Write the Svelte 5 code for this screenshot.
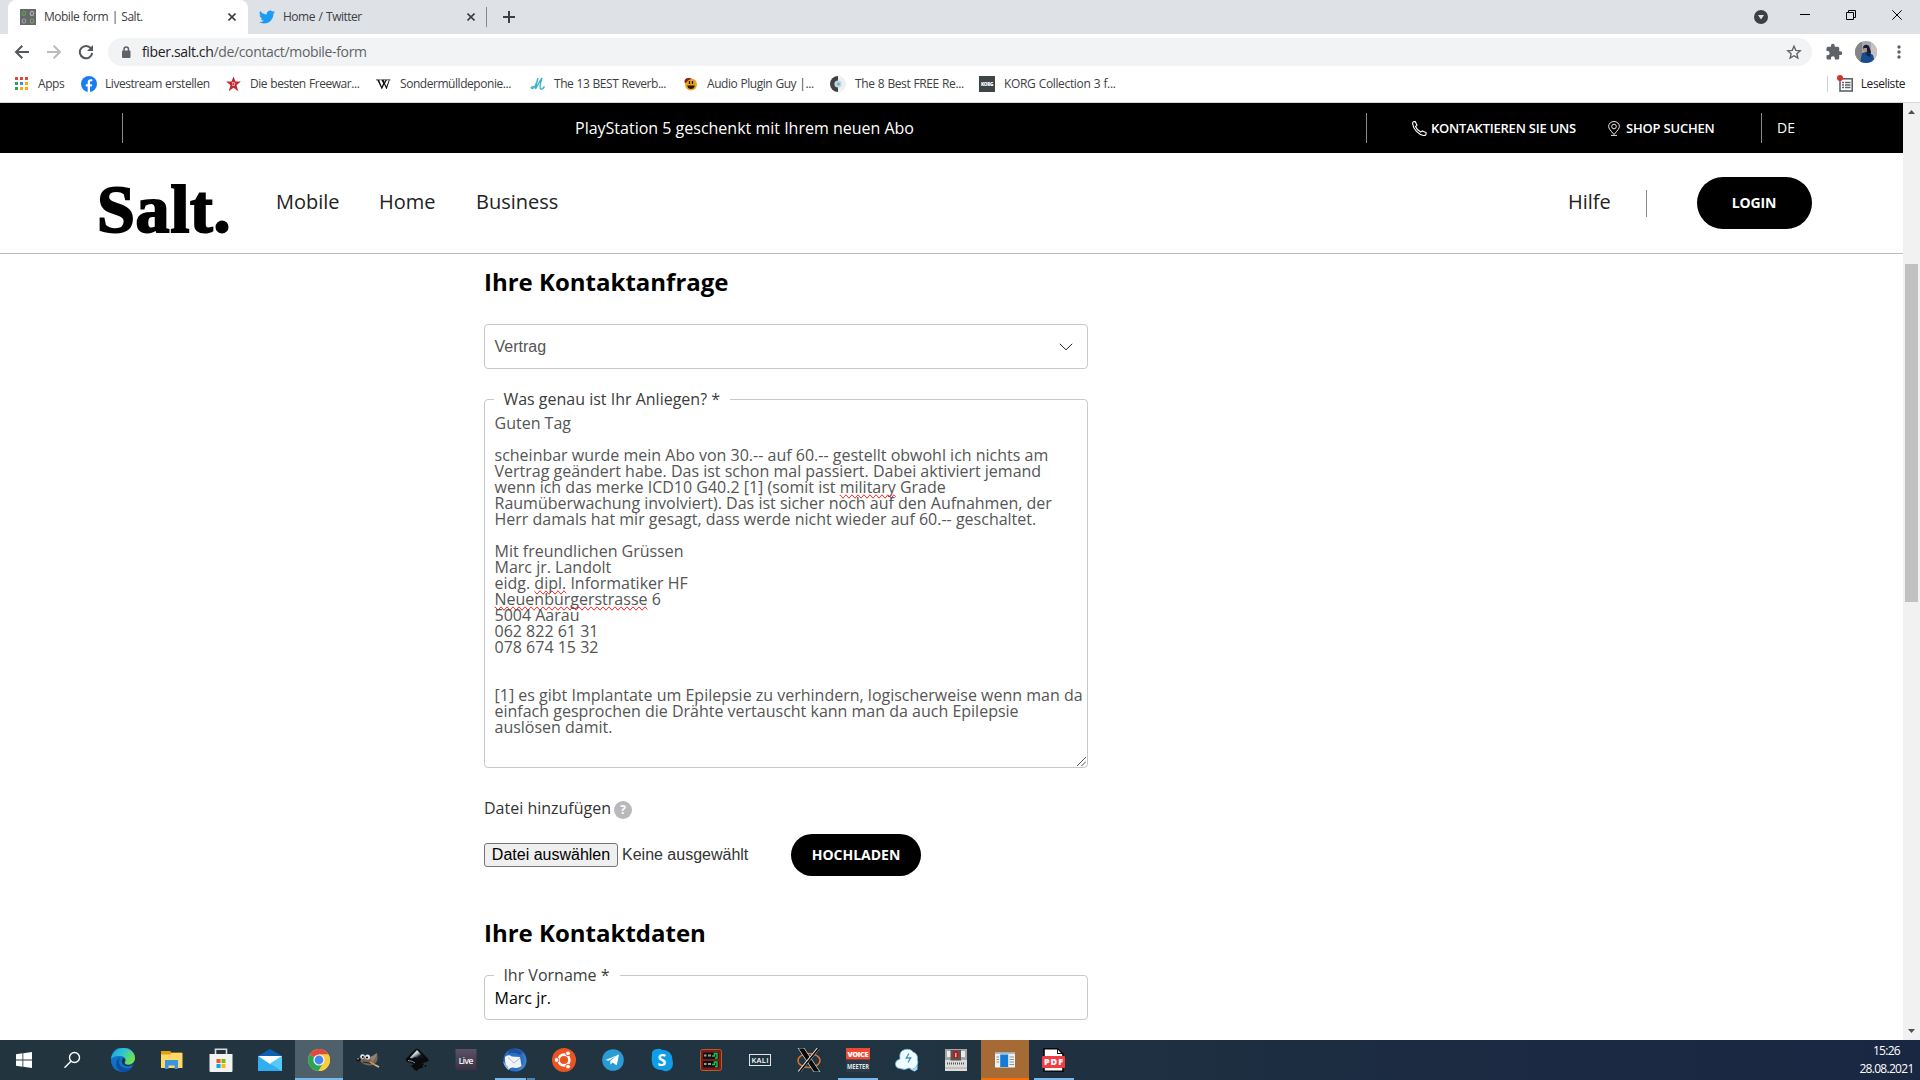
<script>
  const bookmarks = [
    { icon: 'apps', label: 'Apps' },
    { icon: 'facebook', label: 'Livestream erstellen' },
    { icon: 'star', label: 'Die besten Freewar...' },
    { icon: 'wiki', label: 'Sondermülldeponie...' },
    { icon: 'script', label: 'The 13 BEST Reverb...' },
    { icon: 'guy', label: 'Audio Plugin Guy |...' },
    { icon: 'dial', label: 'The 8 Best FREE Re...' },
    { icon: 'korg', label: 'KORG Collection 3 f...' }
  ];
  const tasks = [
    { id: 'edge' }, { id: 'files' }, { id: 'store' }, { id: 'mail' },
    { id: 'chrome', state: 'active' }, { id: 'gimp' }, { id: 'inkscape' }, { id: 'live' },
    { id: 'thunderbird', state: 'stacked' }, { id: 'ubuntu' }, { id: 'telegram' }, { id: 'skype' },
    { id: 'rack' }, { id: 'kali' }, { id: 'xorg' }, { id: 'voicemeeter', state: 'open' },
    { id: 'cloud' }, { id: 'scanner' }, { id: 'window', state: 'alert' }, { id: 'pdf', state: 'open' }
  ];
</script>

<div class="screen">
  <div class="tabs">
    <div class="tab active">
      <svg class="fav" width="16" height="16" viewBox="0 0 16 16"><rect width="16" height="16" fill="#65696b"/><g fill="none" stroke-width="1.2"><ellipse cx="4" cy="4.4" rx="1.7" ry="2" stroke="#6c9750"/><ellipse cx="12" cy="4.4" rx="1.7" ry="2" stroke="#a8adaf"/><ellipse cx="4" cy="12" rx="1.7" ry="2" stroke="#999ea0"/><ellipse cx="12" cy="12" rx="1.7" ry="2" stroke="#7fa05a"/></g></svg>
      <span class="title">Mobile form | Salt.</span>
      <svg class="x" width="8" height="8" viewBox="0 0 8 8"><path d="M.5.5l7 7M7.5.5l-7 7" stroke="#3c4043" stroke-width="1.6"/></svg>
    </div>
    <div class="tab second">
      <svg class="fav" width="16" height="16" viewBox="0 0 24 24"><path fill="#1d9bf0" d="M23.95 4.57a10 10 0 0 1-2.82.78 4.96 4.96 0 0 0 2.16-2.73c-.95.56-2 .96-3.13 1.19a4.92 4.92 0 0 0-8.39 4.48A13.9 13.9 0 0 1 1.64 3.16a4.92 4.92 0 0 0 1.52 6.57 4.9 4.9 0 0 1-2.23-.61v.06a4.92 4.92 0 0 0 3.95 4.83 5 5 0 0 1-2.21.08 4.94 4.94 0 0 0 4.6 3.42A9.87 9.87 0 0 1 0 19.54a13.94 13.94 0 0 0 7.55 2.21c9.05 0 14-7.5 14-13.98 0-.21 0-.42-.02-.63a9.94 9.94 0 0 0 2.42-2.57z"/></svg>
      <span class="title">Home / Twitter</span>
      <svg class="x" width="8" height="8" viewBox="0 0 8 8"><path d="M.5.5l7 7M7.5.5l-7 7" stroke="#3c4043" stroke-width="1.6"/></svg>
    </div>
    <i class="tabline"></i>
    <svg class="plus" width="12" height="12" viewBox="0 0 12 12"><path d="M6 0v12M0 6h12" stroke="#3c4043" stroke-width="2"/></svg>
    <div class="winbtns">
      <svg width="16" height="16" viewBox="0 0 16 16"><circle cx="8" cy="8" r="7" fill="#3c4043"/><path d="M5 6h6l-3 4.6z" fill="#dee1e6"/></svg>
      <svg width="10" height="16" viewBox="0 0 10 16"><path d="M0 5.5h10" stroke="#000"/></svg>
      <svg width="10" height="16" viewBox="0 0 10 16"><path d="M.5 3.500h7v7h-7zM2.500 3.500v-2h7v7h-2" fill="none" stroke="#000"/></svg>
      <svg width="10" height="16" viewBox="0 0 10 16"><path d="M.3 1.300l9.400 9.400M9.700 1.300L.3 10.700" stroke="#000"/></svg>
    </div>
  </div>

  <div class="toolbar">
    <svg width="16" height="16" viewBox="0 0 16 16"><path d="M15 8H2M8.300 1.700L2 8l6.300 6.300" fill="none" stroke="#54585d" stroke-width="2"/></svg>
    <svg width="16" height="16" viewBox="0 0 16 16"><path d="M1 8h13M7.700 1.700L14 8l-6.300 6.300" fill="none" stroke="#b9bbbe" stroke-width="2"/></svg>
    <svg width="16" height="16" viewBox="0 0 16 16"><path d="M13.200 4.600A6.200 6.200 0 1 0 14.200 9" fill="none" stroke="#54585d" stroke-width="2"/><path d="M15 1v6H9z" fill="#54585d"/></svg>
    <div class="omni">
      <svg width="10" height="13" viewBox="0 0 10 13"><rect x="1" y="4.500" width="8.500" height="7.500" rx="1" fill="#5f6368"/><path d="M3 5V3.300a2.250 2.250 0 0 1 4.500 0V5" fill="none" stroke="#5f6368" stroke-width="1.500"/></svg>
      <span class="url"><b>fiber.salt.ch</b>/de/contact/mobile-form</span>
      <svg class="fave" width="16" height="16" viewBox="0 0 24 24"><path d="M12 3.300l2.700 6.200 6.700.6-5.100 4.500 1.500 6.600-5.800-3.500-5.800 3.500 1.500-6.600-5.100-4.500 6.700-.6z" fill="none" stroke="#5f6368" stroke-width="2"/></svg>
    </div>
    <svg class="puzzle" width="18" height="18" viewBox="0 0 24 24"><path fill="#5f6368" d="M20.500 11H19V7a2 2 0 0 0-2-2h-4V3.500a2.500 2.500 0 0 0-5 0V5H4a2 2 0 0 0-2 2v3.800h1.500a2.700 2.700 0 0 1 0 5.400H2V20c0 1.100.9 2 2 2h3.800v-1.500a2.700 2.700 0 0 1 5.400 0V22H17a2 2 0 0 0 2-2v-4h1.500a2.500 2.500 0 0 0 0-5z"/></svg>
    <svg class="avatar" width="22" height="22" viewBox="0 0 22 22"><clipPath id="av"><circle cx="11" cy="11" r="11"/></clipPath><g clip-path="url(#av)"><rect width="22" height="22" fill="#a5a6a8"/><rect width="7" height="22" fill="#858486"/><rect x="16" width="6" height="22" fill="#c5c2c0"/><path d="M8 6q2-4 6-1l2 6-6 1z" fill="#16193b"/><path d="M9 7h3v4H9z" fill="#b98e7d"/><path d="M5 22l2-10 5-1 6 3 2 8z" fill="#174c8f"/><path d="M12 10l4 1-1 5-4-2z" fill="#18254b"/></g></svg>
    <svg class="dots" width="4" height="16" viewBox="0 0 4 16"><g fill="#5f6368"><circle cx="2" cy="3" r="1.700"/><circle cx="2" cy="8" r="1.700"/><circle cx="2" cy="13" r="1.700"/></g></svg>
  </div>

  <div class="bookmarks">
    {#each bookmarks as b}
      <div class="bm {b.icon}">
        <svg width="16" height="16" viewBox="0 0 16 16">
          {#if b.icon === 'apps'}
            <path d="M0 1h3v3H0zM5 1h3v3H5zM10 1h3v3h-3z" fill="#ea4335"/><path d="M0 6h3v3H0zM0 11h3v3H0z" fill="#34a060"/><path d="M5 6h3v3H5z" fill="#4285f4"/><path d="M10 6h3v3h-3zM5 11h3v3H5zM10 11h3v3h-3z" fill="#fbab05"/>
          {:else if b.icon === 'facebook'}
            <circle cx="8" cy="8" r="8" fill="#1a7cf2"/><path d="M6.700 16v-5.500H4.800V8.200h1.900V6.500c0-2.200 1.200-3.300 3-3.300l1.600.1v2h-1c-1 0-1.300.5-1.300 1.200v1.700h2.200l-.4 2.300H9V16z" fill="#fff"/>
          {:else if b.icon === 'star'}
            <path d="M7.500.5l2 5h5.300l-4.300 3.700 1.800 6-4.800-3.400-4.800 3.400 1.800-6L.2 5.500h5.300z" fill="#bd2c30"/><path d="M6 6h2.500l.8 1.500L8.500 10H6.200z" fill="#e9a3a0"/><path d="M6.800 7.200h1.200v1.600H6.800z" fill="#a11b20"/>
          {:else if b.icon === 'wiki'}
            <path d="M0 3.500h4.600v.7h-1l2.600 6.200 1.300-2.800-1.500-3.400H5v-.7h4v.7h-.9l.8 1.900.9-1.900h-.9v-.7h3.200v.7h-.9L9.400 7.400l1.400 3.100 2.400-6.300H12v-.7h2.800v.7H14L11.200 13h-.5L8.600 8.600 6.500 13H6L1.800 4.200H0z" fill="#111" transform="translate(-.4)"/>
          {:else if b.icon === 'script'}
            <path d="M1 12c3 3 6-6 7-10-1 4-2 7-2.500 11C8 9 9.500 5 12 2c-1 4-3 9-1.500 11 1.500.8 3-1 4-2.500M1 12c.5-2 3-1 4-1" fill="none" stroke="#41b5cb" stroke-width="1.400"/>
          {:else if b.icon === 'guy'}
            <circle cx="8" cy="8.500" r="6" fill="#e7a81f"/><path d="M1.500 6.500q-.5-4.500 4-4.500l3.500.6-4 1.900-2 2.500z" fill="#8a1c1c"/><path d="M6.500 5v3M9.500 5v3" stroke="#2b1605" stroke-width="1.300"/><path d="M4.200 9.500h7.600q-.8 3.500-3.800 3.500t-3.800-3.500" fill="#2b1605"/>
          {:else if b.icon === 'dial'}
            <path d="M8 0v16A8 8 0 0 1 8 0" fill="#3d4145"/><path d="M8 0v16A8 8 0 0 0 8 0" fill="#eeeff0"/><circle cx="8" cy="8" r="3.600" fill="#c6d3d8"/><circle cx="8.500" cy="8" r="1.600" fill="#5ac1cc"/>
          {:else}
            <rect width="16" height="16" fill="#3f4446"/><text x="8" y="10" font-size="4.500" font-weight="900" text-anchor="middle" fill="#fff" textLength="12" lengthAdjust="spacingAndGlyphs">KORG</text>
          {/if}
        </svg>
        <span>{b.label}</span>
      </div>
    {/each}
    <div class="readlist">
      <svg width="17" height="18" viewBox="0 0 17 18"><rect x="3" y="3.800" width="12.200" height="12.200" fill="none" stroke="#5f6368" stroke-width="1.600"/><path d="M5 7.500h2M5 10h2M5 12.500h2M8 7.500h5.500M8 10h5.500M8 12.500h5.500" stroke="#5f6368" stroke-width="1.300"/><circle cx="3" cy="3" r="3" fill="#d93025"/></svg>
      <span>Leseliste</span>
    </div>
  </div>

  <div class="view">
    <div class="page">
      <div class="promo">
        <i class="line first"></i>
        <span class="offer">PlayStation 5 geschenkt mit Ihrem neuen Abo</span>
        <i class="line"></i>
        <svg class="phone" width="15" height="15" viewBox="0 0 15 15"><path d="M1.200.8l2-.3 1.800 3.700-1.500 1.300c.8 2.200 3 4.400 5.200 5.600l1.500-1.200 3.900 1.700-.2 2c-.5.8-1.500 1-2.300.9C6.500 13.600 1.400 8.300.7 3.100.5 2.200.6 1.400 1.200.8z" fill="none" stroke="#fff" stroke-width="1.100"/></svg>
        <span class="contact">KONTAKTIEREN SIE UNS</span>
        <svg class="pin" width="12" height="15" viewBox="0 0 12 15"><path d="M6 13.500C2.500 9.500.6 7.500.6 5.400a5.400 4.900 0 0 1 10.800 0c0 2.100-1.900 4.100-5.400 8.100zM3 14.400h6" fill="none" stroke="#fff" stroke-width=".9"/><circle cx="6" cy="5.500" r="2.300" fill="none" stroke="#fff" stroke-width=".9"/></svg>
        <span class="shop">SHOP SUCHEN</span>
        <i class="line"></i>
        <span class="lang">DE</span>
      </div>
      <header>
        <div class="logo">Salt.</div>
        <nav><span class="n1">Mobile</span><span class="n2">Home</span><span class="n3">Business</span></nav>
        <span class="help">Hilfe</span>
        <i class="sep"></i>
        <button class="login">LOGIN</button>
      </header>
      <main>
        <h2>Ihre Kontaktanfrage</h2>
        <div class="select"><span>Vertrag</span><svg width="14" height="8" viewBox="0 0 14 8"><path d="M.8.800l6.200 6 6.200-6" fill="none" stroke="#222" stroke-width="1"/></svg></div>
        <div class="area">
          <span class="legend l1">Was genau ist Ihr Anliegen? *</span>
          <div class="msg">Guten Tag

scheinbar wurde mein Abo von 30.-- auf 60.-- gestellt obwohl ich nichts am
Vertrag geändert habe. Das ist schon mal passiert. Dabei aktiviert jemand
wenn ich das merke ICD10 G40.2 [1] (somit ist <u>military</u> Grade
Raumüberwachung involviert). Das ist sicher noch auf den Aufnahmen, der
Herr damals hat mir gesagt, dass werde nicht wieder auf 60.-- geschaltet.

Mit freundlichen Grüssen
Marc jr. Landolt
eidg. <u>dipl.</u> Informatiker HF{'\n'}<u>Neuenburgerstrasse</u> 6
5004 Aarau
062 822 61 31
078 674 15 32


[1] es gibt Implantate um Epilepsie zu verhindern, logischerweise wenn man da
einfach gesprochen die Drähte vertauscht kann man da auch Epilepsie
auslösen damit.</div>
          <svg class="grip" width="9" height="9" viewBox="0 0 9 9"><path d="M0 9l9-9M4.500 9L9 4.500" stroke="#555" stroke-width="1"/></svg>
        </div>
        <div class="filelabel"><span>Datei hinzufügen</span><i>?</i></div>
        <div class="filerow">
          <span class="choose">Datei auswählen</span>
          <span class="none">Keine ausgewählt</span>
          <button class="upload">HOCHLADEN</button>
        </div>
        <h2 class="second">Ihre Kontaktdaten</h2>
        <div class="input"><span class="legend l2">Ihr Vorname *</span><span class="val">Marc jr.</span></div>
      </main>
    </div>
    <div class="scroll">
      <svg width="17" height="17" viewBox="0 0 17 17"><path d="M5 11l3.500-4 3.500 4z" fill="#505050"/></svg>
      <div class="thumb"></div>
      <svg width="17" height="17" viewBox="0 0 17 17"><path d="M5 6l3.500 4L12 6z" fill="#505050"/></svg>
    </div>
  </div>

  <div class="taskbar">
    <div class="slot"><svg width="16" height="16" viewBox="0 0 16 16"><path d="M0 2.200l6.500-.9v6.300H0zM7.300 1.200L16 0v7.600H7.300zM0 8.400h6.500v6.300L0 13.800zM7.300 8.400H16V16l-8.700-1.200z" fill="#fff"/></svg></div>
    <div class="slot"><svg width="18" height="18" viewBox="0 0 18 18"><circle cx="11.500" cy="6.500" r="5" fill="none" stroke="#fff" stroke-width="1.400"/><path d="M8 10.200L1.500 16.700" stroke="#fff" stroke-width="1.500"/></svg></div>
    <div class="apps">
      {#each tasks as t}
        <div class="slot {t.state ?? ''}">
          <svg width="24" height="24" viewBox="0 0 24 24">
            {#if t.id === 'edge'}
              <defs><linearGradient id="eg" x1="0" y1="0" x2="1" y2=".4"><stop offset="0" stop-color="#249bd8"/><stop offset=".5" stop-color="#2fc2d8"/><stop offset="1" stop-color="#6be352"/></linearGradient></defs>
              <path d="M0 12A12 12 0 0 1 24 10c0 4-3 6.500-6.500 6.500 2 .6 4 .2 5-.5A12 12 0 0 1 12 24C5 24 0 19 0 12z" fill="#0f72c8"/><path d="M0 11C1 4 6 0 12 0c7 0 12 4.500 12 10 0 4-3 6.500-6.500 6.500-3 0-4.500-1.200-3.500-2.800 1-1.900.6-4.700-3.500-5.400C6 7.600 2 9 0 11z" fill="url(#eg)"/><path d="M9 10c-3 5 1 11 8 10.500 2.500-.2 4-1 5.200-2C20 22 16.500 24 12 24 7 23 4 18.500 5.500 14c.7-2 2-3.400 3.500-4z" fill="#0b4f9e"/><path d="M14 14c.8-1.800.4-3.500-1.600-4-2.400 1.600-2.200 6.600 2.200 7.800 3 .8 6.400.2 8.400-2-2 1.200-4 1.400-6 1.200-2.400-.2-3.900-1-3-3z" fill="#22353f"/>
            {:else if t.id === 'files'}
              <path d="M1 3h9l1.500 1.500H22V20H1z" fill="#e0a011"/><path d="M1 6.500h9.500l1-1.500H22.500v15H1z" fill="#ffd865"/><path d="M5 12h13v9h-3.500v-3.500h-6V21H5z" fill="#3a94df"/>
            {:else if t.id === 'store'}
              <path d="M6.500 7V1.300h11V7" fill="none" stroke="#dcdcdc" stroke-width="1.600"/><path d="M.5 6h23v17a1 1 0 0 1-1 1h-21a1 1 0 0 1-1-1z" fill="#f2f2f2"/><path d="M7.500 11h4v4h-4z" fill="#f35325"/><path d="M12.500 11h4v4h-4z" fill="#81bc06"/><path d="M7.500 16h4v4h-4z" fill="#05a6f0"/><path d="M12.500 16h4v4h-4z" fill="#ffba08"/>
            {:else if t.id === 'mail'}
              <path d="M0 8l12-7 12 7v3H0z" fill="#0a62b4"/><path d="M0 8h24v15H0z" fill="#29b5f3"/><path d="M0 8h24l-12 9z" fill="#fff"/><path d="M0 8l12 8L24 23H0z" fill="#31aef0"/><path d="M24 8v15L12 15.500z" fill="#55cafa"/>
            {:else if t.id === 'chrome'}
              <circle cx="12" cy="12" r="11" fill="#fccc3e"/><path d="M12 12L2.500 6.500A11 11 0 0 1 21.500 6.500H12z" fill="#e24a3e"/><path d="M12 12L2.500 6.500A11 11 0 0 0 11.500 23l5.300-8.500z" fill="#2aa455"/><path d="M12 6.500h9.500A11 11 0 0 1 11.500 23l5.200-8.500z" fill="#fccc3e"/><circle cx="12" cy="12" r="5.600" fill="#f4f6f8"/><circle cx="12" cy="12" r="4.400" fill="#4688f1"/>
            {:else if t.id === 'gimp'}
              <path d="M3 9l5 1 6-1q3-1 7-4 1.500 5-.5 9-3 4-8 3.500-5-.5-8-4z" fill="#6f675b"/><path d="M14 9q3-1 7-4-1 6-5 9z" fill="#8f8473"/><circle cx="6.500" cy="8.500" r="2.300" fill="#e8e8e8"/><circle cx="11.500" cy="9" r="2.500" fill="#e8e8e8"/><circle cx="6.800" cy="9" r="1"/><circle cx="11" cy="9.500" r="1.100"/><ellipse cx="2.500" cy="11.500" rx="2.300" ry="2" fill="#14161a"/><circle cx="2" cy="10.800" r=".7" fill="#eee"/><path d="M7 14l9 1.500" stroke="#222" stroke-width="1.200"/><path d="M14 14l5 3" stroke="#e08a35" stroke-width="1.800"/><path d="M19 17l4 2" stroke="#c9b8a8" stroke-width="1.800"/>
            {:else if t.id === 'inkscape'}
              <defs><linearGradient id="ik" x1="0" y1="0" x2="1" y2="1"><stop offset=".1" stop-color="#fff"/><stop offset=".45" stop-color="#b9c6d3"/><stop offset=".7" stop-color="#101820"/></linearGradient></defs>
              <path d="M12 .8q1 0 1.800.8l9 9q2 2.500-1.500 3.400l-4 1 2 1.200-2 1.500q2 1-.5 2.300l-3 1-2 2-3-1.500-1-2-2.500-1.500 3-1-1-1.500-4.500-1.500Q-.500 13 1.200 10.600l9-9Q11 .8 12 .8z" fill="#090b0d"/><path d="M12 2l7 7.500q-2 1-4-.5-1 2-3 1.500-2-2-4-.5-2 1-3-.5z" fill="url(#ik)"/><path d="M3 12.500q5 .5 7 2.500" stroke="#8794a0" fill="none"/><circle cx="20.500" cy="18" r=".9" fill="#090b0d"/>
            {:else if t.id === 'live'}
              <defs><linearGradient id="lv" x1="0" y1="0" x2="0" y2="1"><stop offset="0" stop-color="#5b5168"/><stop offset="1" stop-color="#3a3244"/></linearGradient></defs>
              <rect x="1.500" y="1" width="21" height="21" fill="url(#lv)"/><text x="12" y="15.500" font-size="9" font-weight="600" text-anchor="middle" fill="#f1eff3" textLength="15">Live</text>
            {:else if t.id === 'thunderbird'}
              <circle cx="12" cy="12" r="11.500" fill="#2a6fc4"/><path d="M6 2q8-3 14 3l-3 2Q11 3 5 6z" fill="#1b4f9f"/><path d="M17 4q6 5 3 12l-6 7q9-1 9.500-10Q23 7 17 4z" fill="#3f7fc9"/><path d="M2 9Q5 6 9 8.500l8 .5 1.500 9q-4 3-8 1.500-3-.5-5 2-4-4-3.500-12.500z" fill="#f2f3f6"/><path d="M5 9.500l6 5.500 6-5" fill="none" stroke="#b4bccb"/><path d="M0 13q1 6 6 9.500l-1-4q-3-2-5-5.500z" fill="#8fbbe8"/>
            {:else if t.id === 'ubuntu'}
              <circle cx="12" cy="12" r="12" fill="#e95420"/><circle cx="12" cy="12" r="5.400" fill="none" stroke="#fff" stroke-width="2.600"/><g fill="#fff" stroke="#e95420"><circle cx="4.600" cy="12" r="2.400"/><circle cx="16" cy="5.400" r="2.400"/><circle cx="16" cy="18.600" r="2.400"/></g>
            {:else if t.id === 'telegram'}
              <circle cx="12" cy="12" r="10.800" fill="#2b9bd6"/><path d="M4.500 12L18 6.500l-2.300 11-4-3-2.200 2-.3-3.600 6-4.800-7.600 4.600z" fill="#fff"/>
            {:else if t.id === 'skype'}
              <path d="M2 7Q1 2 7 1q3-.5 5 .8Q22 2 22.500 12q2 9-5 11-3 .6-5-.8Q2 22 1.800 13q-.4-3 .2-6z" fill="#0f9de8"/><text x="12" y="17.500" font-size="16" font-weight="700" text-anchor="middle" fill="#fff">S</text>
            {:else if t.id === 'rack'}
              <rect x="1.500" y="1.500" width="21" height="21" rx="2" fill="#851815" stroke="#b0602c"/><path d="M4 4.500h15.500v6.500H4zM4 13h15.500v6.500H4z" fill="#0b1412"/><path d="M5 7.500h2.500M5 16h2.500M9 7.500h3M9 16h3" stroke="#999" stroke-width="2"/><path d="M13 8h2.500V5.500H18v4.500h-2M13 16.500h2.500V14H18v4.500h-2" fill="none" stroke="#12c84f" stroke-width="1.400"/>
            {:else if t.id === 'kali'}
              <rect x="1.500" y="6.500" width="21" height="11" fill="none" stroke="#dfe5e8"/><text x="12" y="15" font-size="7.500" font-weight="600" text-anchor="middle" fill="#fff" textLength="17">KALI</text>
            {:else if t.id === 'xorg'}
              <ellipse cx="12" cy="12.500" rx="11" ry="7" fill="none" stroke="#dc7028" stroke-width="1.500"/><path d="M1 0h6l16 24h-6z" fill="#080808" stroke="#ddd" stroke-width=".8"/><path d="M21.500 0L2 24" stroke="#ddd" stroke-width="2.800"/><path d="M22 0L2.500 24" stroke="#080808" stroke-width="1.600"/>
            {:else if t.id === 'voicemeeter'}
              <rect width="24" height="11.500" fill="#ef4936"/><rect y="12" width="24" height="12" fill="#2d3a48"/><text x="12" y="8.500" font-size="7.500" font-weight="800" text-anchor="middle" fill="#fff" textLength="21">VOICE</text><text x="12" y="20.500" font-size="7" font-weight="700" text-anchor="middle" fill="#dfe3e7" textLength="22" lengthAdjust="spacingAndGlyphs">MEETER</text>
            {:else if t.id === 'cloud'}
              <path d="M5 20.500q-5-.5-4.500-5.500.5-3 4.500-4Q3.500 3 10 1.500q6-1 8 2.500 5 1.500 4.500 7.500 1 3-.5 6t-5 4l-3-1.500q-4 2.500-9 .5z" fill="#f2fbff" stroke="#63b5dc" stroke-width=".8"/><path d="M14.500 21q5 1 8-4v4.500l-3 2z" fill="#a9ddf3"/><path d="M14 5.500l-2.800 4.500h4.500l-2.700 4.500" fill="none" stroke="#3b96bd" stroke-width="1.300"/>
            {:else if t.id === 'scanner'}
              <rect x="1" y="1" width="22" height="22" fill="#dcdcda"/><path d="M1 1h22v11H1z" fill="#a5a5a3"/><path d="M3 3h18v6H3z" fill="#ececea"/><path d="M6.500 2h10.500v10.500H6.500z" fill="#555"/><path d="M9 3h5.500v7H9z" fill="#b02020"/><path d="M11 5h1.500v4H11z" fill="#f0b0a0"/><path d="M3 15.500h17" stroke="#555" stroke-dasharray="1 1" stroke-width="2"/><path d="M1 20h22" stroke="#b9b9b7" stroke-width="1.500"/>
            {:else if t.id === 'window'}
              <rect x="2" y="4" width="20" height="15.500" fill="#eef0f1"/><rect x="2" y="4" width="20" height="1.800" fill="#9eb0bd"/><rect x="7.200" y="6.500" width="8" height="12.500" fill="#157bd8"/><path d="M3.500 9h2.500M3.500 11.500h2.500M3.500 14h2.500M16.500 9H21M16.500 11.500H21M16.500 14H21M16.500 16.500H21" stroke="#8e9396"/>
            {:else}
              <path d="M2 .8h13.500L21 6v17.200H2z" fill="#fff" stroke="#080808" stroke-width="1.600"/><path d="M15 0v6h6z" fill="#111"/><path d="M16 2v3h3" fill="#fff"/><rect x="0" y="8" width="23" height="12" rx="1" fill="#f23c43"/><text x="11.500" y="17" font-size="9" font-weight="800" text-anchor="middle" fill="#fff" textLength="19">PDF</text>
            {/if}
          </svg>
        </div>
      {/each}
    </div>
    <div class="clock"><span class="time">15:26</span><span>28.08.2021</span></div>
  </div>
</div>

<style>
  :global(body) { overflow: hidden; background: #fff; }
  .screen { width: 1920px; height: 1080px; display: flex; flex-direction: column; font: 12px/16px "Open Sans", sans-serif; color: #3c4043; white-space: nowrap; overflow: hidden; box-sizing: border-box; }
  .screen :global(*) { box-sizing: border-box; }
  svg { flex: none; display: block; }
  button { border: 0; color: #fff; background: #000; padding: 0; font: 700 14px/20px "Open Sans", sans-serif; flex: none; }

  .tabs { height: 34px; flex: none; background: #dee1e6; display: flex; align-items: center; padding-left: 8px; }
  .tab { width: 240px; height: 34px; display: flex; align-items: center; padding: 0 12px; }
  .tab.second { padding: 0 13px 0 11px; }
  .tab.active { background: #fff; border-radius: 8px 8px 0 0; }
  .tab .title { margin-left: 8px; flex: 1; letter-spacing: -.5px; word-spacing: 1px; }
  .tabline { width: 1px; height: 20px; background: #85888c; margin-left: -2px; }
  .plus { margin-left: 16px; }
  .winbtns { margin-left: auto; display: flex; gap: 36px; align-items: center; padding-right: 18px; }
  .winbtns svg:first-child { margin-right: -5px; }

  .toolbar { height: 34px; margin-top: 1px; flex: none; display: flex; align-items: center; padding-left: 14px; gap: 16px; }
  .omni { width: 1704px; height: 28px; border-radius: 14px; background: #f1f3f4; display: flex; align-items: center; padding: 0 10px 0 13px; margin-left: -2px; flex: none; }
  .url { font-size: 14px; margin-left: 11px; flex: 1; color: #5f6368; letter-spacing: -.35px; }
  .url b { font-weight: 400; color: #202124; }
  .puzzle { margin-left: -3px; }
  .avatar { margin-left: -4px; }
  .dots { margin-left: 4px; }

  .bookmarks { height: 33px; flex: none; display: grid; grid-template-columns: 66px 145px 150px 154px 153px 147px 149px 150px 1fr; padding: 0 0 3px 15px; align-items: center; }
  .bm { display: flex; align-items: center; gap: 8px; letter-spacing: -.45px; word-spacing: .5px; }
  .bm.apps { gap: 7px; }
  .bm.dial { gap: 9px; letter-spacing: -.4px; }
  .bm.korg { gap: 9px; letter-spacing: -.35px; }
  .readlist { justify-self: end; display: flex; align-items: center; gap: 7px; height: 16px; border-left: 1px solid #ccd0d4; padding: 0 15px 0 9px; letter-spacing: -.45px; color: #202124; }

  .view { height: 938px; border-top: 1px solid #d8d8d8; flex: none; display: flex; }
  .page { width: 1903px; height: 937px; overflow: hidden; background: #fff; }
  .scroll { width: 17px; background: #f1f1f1; display: flex; flex-direction: column; }
  .thumb { width: 13px; height: 338px; background: #c1c1c1; margin: 144px 2px auto; }

  .promo { height: 50px; background: #000; color: #fff; display: flex; align-items: center; }
  .line { width: 1px; height: 30px; background: #8a8a8a; flex: none; }
  .line.first { margin-left: 122px; }
  .offer { width: 791px; margin-left: 452px; font-size: 16px; font-weight: 500; }
  .phone { margin-left: 45px; }
  .contact { width: 166px; margin-left: 4px; font-size: 13px; font-weight: 600; letter-spacing: -.22px; }
  .pin { margin-left: 11px; }
  .shop { width: 135px; margin-left: 6px; font-size: 13px; font-weight: 600; letter-spacing: -.2px; }
  .lang { margin-left: 15px; font-size: 14px; font-weight: 500; }

  header { height: 101px; border-bottom: 1px solid #bbb; display: flex; align-items: center; padding-left: 97px; }
  .logo { width: 179px; font: 700 68px/80px "Liberation Serif", serif; letter-spacing: .8px; color: #000; -webkit-text-stroke: 2px #000; padding-top: 11px; }
  nav { display: flex; font-size: 20px; line-height: 28px; color: #222; padding-bottom: 3px; }
  .n1 { width: 103px; }
  .n2 { width: 97px; }
  .help { margin-left: auto; font-size: 20px; width: 78px; color: #222; padding-bottom: 2px; }
  .sep { width: 1px; height: 27px; background: #888; margin-right: 50px; }
  .login { width: 115px; height: 52px; border-radius: 26px; margin-right: 91px; letter-spacing: -.1px; padding-right: 1px; }

  main { width: 604px; margin-left: 484px; color: #333; font-size: 16px; line-height: 20px; }
  h2 { margin: 0; padding-top: 12px; height: 70px; font-size: 24px; line-height: 32px; font-weight: 700; color: #000; }
  .select { height: 45px; border: 1px solid #c9c9c9; border-radius: 4px; display: flex; justify-content: space-between; align-items: center; padding: 1px 14px 0 9.5px; font-family: "Liberation Sans", sans-serif; color: #555; }
  .area { height: 369px; margin-top: 30px; border: 1px solid #c9c9c9; border-radius: 4px; position: relative; padding: 15px 0 0 9.5px; }
  .legend { position: absolute; top: -11px; left: 9px; background: #fff; padding: 0 9.4px; height: 22px; color: #3c3c3c; }
  .l1 { width: 236px; }
  .l2 { width: 126px; }
  .msg { white-space: pre; line-height: 16px; color: #555; }
  .msg u { text-decoration: spelling-error; }
  .grip { position: absolute; right: 1px; bottom: 1px; }
  .filelabel { margin-top: 29px; height: 22px; display: flex; align-items: center; gap: 3px; }
  .filelabel i { width: 18px; height: 18px; border-radius: 50%; background: #b9b9b9; color: #fff; font: 700 12px/18px "Open Sans", sans-serif; text-align: center; margin-top: 4px; }
  .filerow { display: flex; align-items: center; margin-top: 15px; height: 42px; font-family: "Liberation Sans", sans-serif; }
  .choose { width: 134px; height: 24px; border: 1px solid #767676; border-radius: 3px; background: #efefef; color: #000; line-height: 21px; text-align: center; }
  .none { width: 169px; margin-left: 4px; }
  .upload { width: 130px; height: 42px; border-radius: 21px; }
  h2.second { padding-top: 41px; height: 99px; }
  .input { height: 45px; border: 1px solid #c9c9c9; border-radius: 4px; position: relative; padding: 12px 0 0 9.5px; color: #000; }

  .taskbar { height: 40px; flex: none; display: flex; background: linear-gradient(90deg, #22353f 0, #203341 50%, #1b2942 80%, #1a2742 100%); color: #fff; }
  .slot { width: 48px; height: 40px; display: flex; align-items: center; justify-content: center; flex: none; border-bottom: 2px solid transparent; padding-top: 2px; }
  .taskbar .apps { display: flex; gap: 1px; margin-left: 3px; }
  .slot.active { background: #4e6069; border-bottom-color: #76b9ed; }
  .slot.alert { background: #a66a35; border-bottom-color: #f97000; }
  .slot.open { width: 40px; margin: 0 4px; border-bottom-color: #76b9ed; }
  .slot.stacked { width: 40px; margin: 0 4px; border-bottom: 0; padding-bottom: 2px; background: linear-gradient(90deg, #76b9ed 31px, #22353f 31px, #22353f 32px, #4f82ad 32px) bottom / 100% 2px no-repeat; }
  .clock { margin-left: auto; width: 67px; display: flex; flex-direction: column; align-items: center; line-height: 18px; padding-top: 2px; letter-spacing: -.7px; }
</style>
